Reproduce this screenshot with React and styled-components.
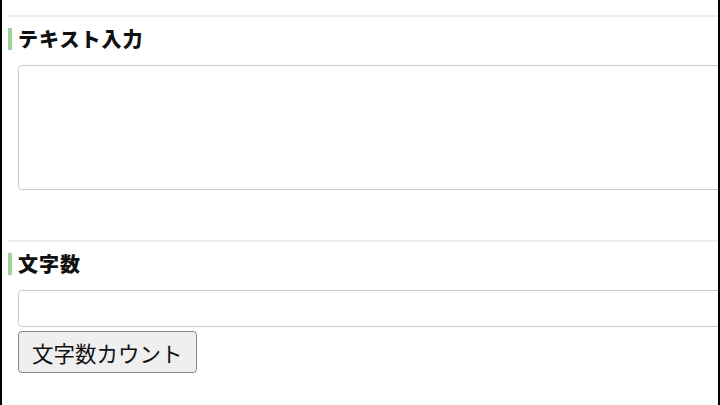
import React, { useState } from 'react';
import styled, { createGlobalStyle } from 'styled-components';

const GlobalStyle = createGlobalStyle`
    html, body {
        margin: 0;
        padding: 0;
        background: #fff;
    }
    body {
        font-family: "Noto Sans CJK JP", "Noto Sans", sans-serif;
        color: #111;
    }
`

function App() {
    const [text, setText] = useState('');
    const [count, setCount] = useState('');
    return (
        <Frame>
            <GlobalStyle />
            <Section>
                <Rule />
                <Heading>テキスト入力</Heading>
                <TextArea value={text} onChange={e => setText(e.target.value)} />
            </Section>
            <Section>
                <Rule />
                <Heading>文字数</Heading>
                <Field>
                    <Input value={count} readOnly />
                    <Button onClick={() => setCount(String(text.length))}>文字数カウント</Button>
                </Field>
            </Section>
        </Frame>
    )
}

const Frame = styled.div`
    width: 720px;
    height: 405px;
    box-sizing: border-box;
    border-left: 2px solid #000;
    border-right: 2px solid #000;
    padding-left: 6px;
    overflow: hidden;
    display: flex;
    flex-direction: column;
    gap: 35px;
`

const Section = styled.section`
    display: flex;
    flex-direction: column;
    padding-top: 15px;
`

const Rule = styled.hr`
    margin: 0;
    border: none;
    border-top: 2px solid #eee;
    width: 100%;
`

const Heading = styled.h2`
    margin: 11px 0 0;
    border-left: 4px solid #9fd09f;
    padding-left: 6px;
    font-size: 20px;
    font-weight: 900;
    line-height: 22px;
    letter-spacing: 1px;
    color: #111;
`

const TextArea = styled.textarea`
    margin: 15px 0 0 10px;
    width: 760px;
    height: 125px;
    box-sizing: border-box;
    border: 1px solid #ccc;
    border-radius: 4px;
    resize: none;
    flex-shrink: 0;
`

const Field = styled.div`
    display: flex;
    flex-direction: column;
    align-items: flex-start;
    gap: 4px;
    margin: 15px 0 0 10px;
`

const Input = styled.input`
    width: 760px;
    height: 37px;
    box-sizing: border-box;
    border: 1px solid #ccc;
    border-radius: 4px;
`

const Button = styled.button`
    height: 42px;
    padding: 0 13px;
    font-family: "Noto Sans CJK JP", sans-serif;
    font-size: 21.5px;
    color: #111;
    background: #efefef;
    border: 1px solid #888;
    border-radius: 4px;
    cursor: pointer;
`

export default App
